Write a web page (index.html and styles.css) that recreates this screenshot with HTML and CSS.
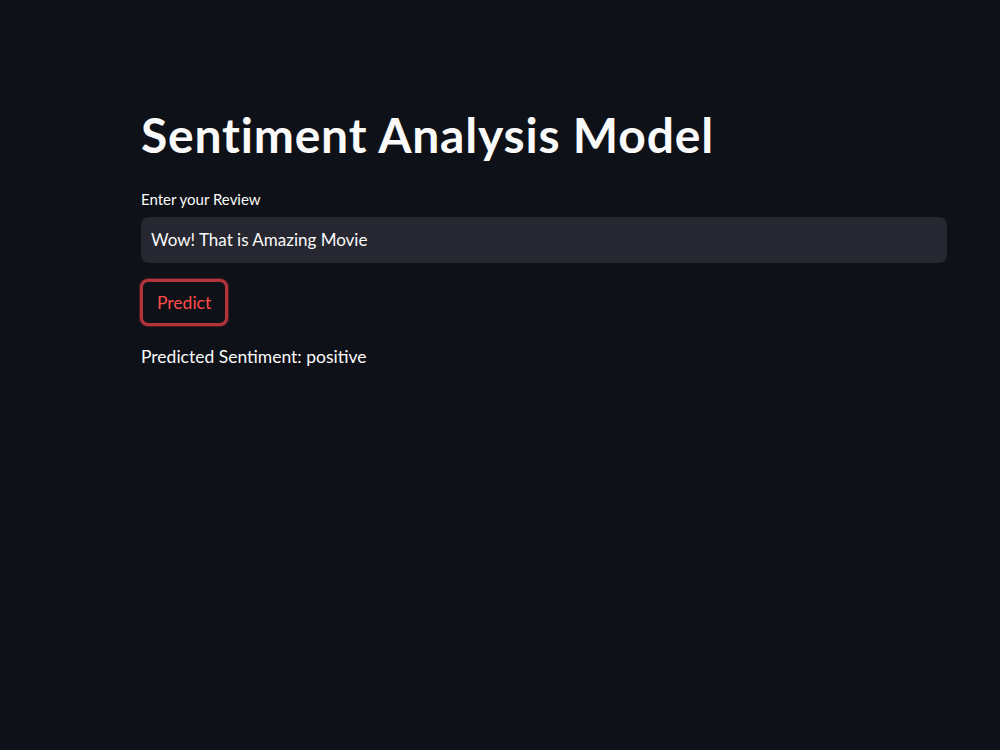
FILE: index.html
```html
<!DOCTYPE html>
<html lang="en">
<head>
  <meta charset="UTF-8">
  <meta name="viewport" content="width=device-width, initial-scale=1.0">
  <title>Sentiment Analysis Model</title>
  <link rel="stylesheet" href="styles.css">
</head>
<body>
  <div class="container">
    <h1>Sentiment Analysis Model</h1>

    <!-- Review input -->
    <label for="review">Enter your Review</label>
    <input type="text" id="review" value="Wow! That is Amazing Movie">

    <button class="predict">Predict</button>

    <!-- Result -->
    <p class="result">Predicted Sentiment: positive</p>
  </div>
</body>
</html>
```

FILE: styles.css
```css
body {
  font-family: Lato, "Noto Sans", sans-serif;
  margin: 0;
  padding: 0;
  background-color: #0e1117;
  color: #fafafa;
}
.container {
  padding: 106px 53px 0 141px;
}
h1 {
  font-size: 48px;
  font-weight: 700;
  letter-spacing: 0.8px;
  line-height: 1.2;
  margin: 0 0 26px;
}
label {
  display: block;
  font-size: 15px;
  line-height: 18px;
  margin-bottom: 9px;
}
input {
  display: block;
  width: 100%;
  box-sizing: border-box;
  height: 46px;
  padding: 0 10px;
  border: none;
  border-radius: 8px;
  background: #262730;
  color: #fafafa;
  font-family: inherit;
  font-size: 17px;
  outline: none;
}
.predict {
  display: block;
  margin: 16px 0 0 -1px;
  padding: 0 14px;
  height: 47px;
  border: 3px solid #b3343b;
  border-radius: 8px;
  background: #0e1117;
  color: #ff4b4b;
  font-family: inherit;
  font-size: 17.5px;
  box-shadow: 0 0 0 1px rgba(255, 75, 75, 0.25);
}
.result {
  margin: 21px 0 0;
  font-size: 17.5px;
  line-height: 20px;
}
```
